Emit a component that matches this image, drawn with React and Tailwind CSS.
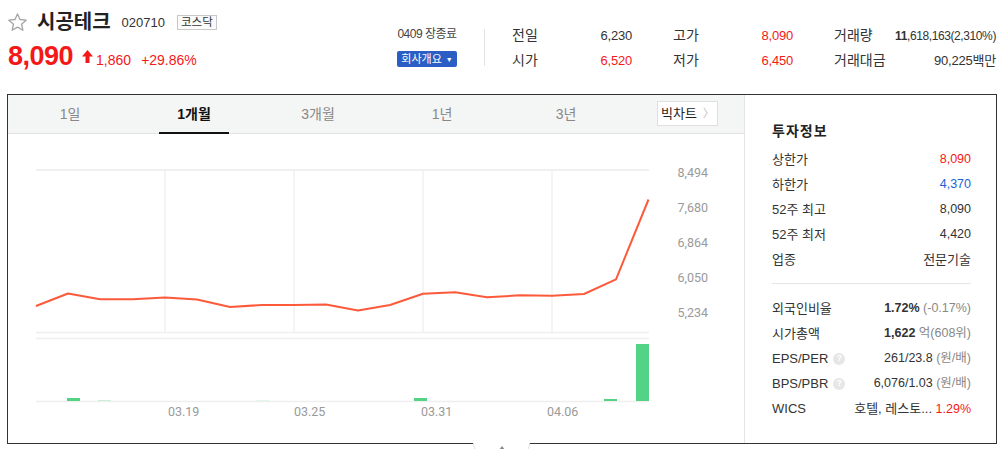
import React from "react";

const RED = "text-[#f51818]";

const pts = [
  [36, 306], [68, 293.5], [100, 299.3], [133, 299.3], [165, 297.5], [197, 299.5],
  [230, 307], [262, 305], [294, 305], [326, 304.5], [358, 310.5], [390, 305],
  [423, 293.7], [455, 292.3], [487, 297.3], [520, 295.3], [552, 295.7], [584, 294],
  [616, 279.3], [648.5, 199.5],
];

const bars = [
  [67, 398, 3, "#53d385"],
  [98, 400, 1, "#c9efd7"],
  [256, 400, 1, "#e3f6ea"],
  [414, 398, 3, "#53d385"],
  [604, 399, 2, "#53d385"],
  [636, 344, 57, "#53d385"],
];

function Chart() {
  const d = pts.map((p, i) => (i === 0 ? "M" : "L") + p[0] + " " + p[1]).join(" ");
  const yl = [["8,494", 177], ["7,680", 212], ["6,864", 247], ["6,050", 282], ["5,234", 317]];
  const xl = [["03.19", 168], ["03.25", 294], ["03.31", 421], ["04.06", 547]];
  return (
    <svg width="736" height="309" viewBox="8 134 736 309" className="block">
      <line x1="36" y1="170" x2="649" y2="170" stroke="#f0f0f0" strokeWidth="2" />
      {[165, 294, 423, 552].map((x) => (
        <line key={x} x1={x} y1="170" x2={x} y2="332" stroke="#f0f0f0" strokeWidth="1.5" />
      ))}
      <line x1="36" y1="332.5" x2="649" y2="332.5" stroke="#efefef" strokeWidth="1.5" />
      <line x1="36" y1="338.5" x2="649" y2="338.5" stroke="#efefef" strokeWidth="1.5" />
      <line x1="36" y1="401.5" x2="649" y2="401.5" stroke="#efefef" strokeWidth="1.5" />
      <path d={d} fill="none" stroke="#fd5a3b" strokeWidth="2" strokeLinejoin="round" />
      {bars.map(([x, y, h, c], i) => (
        <rect key={i} x={x} y={y} width="13" height={h} fill={c} />
      ))}
      {yl.map(([t, y]) => (
        <text key={t} x="708" y={y} textAnchor="end" fontSize="12.5" fill="#9a9a9a" fontFamily="Roboto, 'Liberation Sans', sans-serif">
          {t}
        </text>
      ))}
      {xl.map(([t, x]) => (
        <text key={t} x={x} y="416" fontSize="12.5" fill="#9a9a9a" fontFamily="Roboto, 'Liberation Sans', sans-serif">
          {t}
        </text>
      ))}
    </svg>
  );
}

function Help() {
  return (
    <span className="ml-[5px] inline-flex h-[12px] w-[12px] items-center justify-center rounded-full bg-[#e6e6e6] text-[9px] font-bold leading-none text-white">
      ?
    </span>
  );
}

function Row({ label, children }) {
  return (
    <div className="flex h-[25px] items-center justify-between">
      <div className="flex items-center text-[13px] text-[#333]">{label}</div>
      <div className="text-[12.5px] text-[#333]">{children}</div>
    </div>
  );
}

export default function App() {
  const tabs = ["1일", "1개월", "3개월", "1년", "3년"];
  return (
    <div className="relative h-[449px] w-[1004px] overflow-hidden bg-white font-['Liberation_Sans','Noto_Sans_CJK_KR',sans-serif] text-[#333]">
      {/* header */}
      <div className="flex h-[94px]">
        <div className="w-[390px] pl-[7px] pt-[11px]">
          <div className="flex h-[22px] items-center">
            <svg width="21" height="21" viewBox="0 0 24 24" className="mr-[9px]">
              <path d="M12 2.2l2.9 6.4 7 .7-5.3 4.7 1.6 6.9L12 17.3l-6.2 3.6 1.6-6.9-5.3-4.7 7-.7z" fill="none" stroke="#a5a5a5" strokeWidth="1.5" strokeLinejoin="round" />
            </svg>
            <span className="text-[20px] font-bold leading-none text-[#222]">시공테크</span>
            <span className="ml-[11px] text-[13px] leading-none text-[#333]">020710</span>
            <span className="ml-[12px] border border-[#c8c8c8] bg-[#fafafa] px-[3px] text-[11.5px] leading-[13px] text-[#333]">코스닥</span>
          </div>
          <div className={`mt-[7px] flex items-baseline pl-[1px] ${RED}`}>
            <span className="text-[27px] font-bold leading-[32px] tracking-[-0.5px]">8,090</span>
            <svg width="11" height="13" viewBox="0 0 11 13" className="ml-[9px] self-center">
              <path d="M5.5 0L11 6.5H7.5V13h-4V6.5H0z" fill="#f51818" />
            </svg>
            <span className="ml-[3px] text-[14px]">1,860</span>
            <span className="ml-[10px] text-[14px]">+29.86%</span>
          </div>
        </div>
        <div className="ml-[7px] w-[60px] pt-[27px]">
          <div className="text-center text-[12px] leading-[14px] tracking-[-0.5px] text-[#444]">0409 장종료</div>
          <div className="mt-[10px] flex h-[16px] items-center justify-center rounded-[2px] bg-[#2b5ec5] text-[11px] leading-none text-white">
            회사개요
            <span className="ml-[4px] text-[7px]">▼</span>
          </div>
        </div>
        <div className="ml-[27px] mt-[29px] h-[37px] w-px bg-[#e2e2e2]" />
        <div className="ml-[27px] pt-[23px] text-[14px]">
          {[
            [["전일", "6,230", ""], ["고가", "8,090", RED], ["거래량", null, ""]],
            [["시가", "6,520", RED], ["저가", "6,450", RED], ["거래대금", "90,225백만", ""]],
          ].map((row, ri) => (
            <div key={ri} className="flex h-[25px] items-center">
              {row.map(([l, v, c], ci) => (
                <div key={ci} className={`flex items-center justify-between ${ci === 2 ? "w-[162px]" : "mr-[41px] w-[120px]"}`}>
                  <span className="text-[14px] text-[#333]">{l}</span>
                  {v === null ? (
                    <span className="text-[12px] tracking-[-0.4px] text-[#333]">
                      <b>11</b>,618,163(2,310%)
                    </span>
                  ) : (
                    <span className={`text-[13px] tracking-[-0.2px] ${c || "text-[#333]"}`}>{v}</span>
                  )}
                </div>
              ))}
            </div>
          ))}
        </div>
      </div>

      {/* box */}
      <div className="ml-[7px] flex h-[350px] w-[990px] border border-[#333]">
        <div className="flex w-[736px] flex-col">
          <div className="flex h-[39px] border-b border-[#e4e4e4] bg-[#f4f5f5]">
            {tabs.map((t, i) => (
              <div key={t} className="relative flex w-[124px] items-center justify-center">
                <span className={`text-[14px] ${i === 1 ? "font-bold text-[#111]" : "text-[#888]"}`}>{t}</span>
                {i === 1 && <div className="absolute bottom-[-1px] left-[27px] h-[2px] w-[70px] bg-[#111]" />}
              </div>
            ))}
            <div className="ml-[29px] mt-[6px] flex h-[25px] w-[61px] items-center justify-center border border-[#e0e0e0] bg-white text-[13px] text-[#222]">
              빅차트
              <span className="ml-[6px] text-[11px] text-[#bbb]">〉</span>
            </div>
          </div>
          <Chart />
        </div>
        <div className="w-[252px] border-l border-[#e4e4e4] pl-[27px] pr-[25px] pt-[26px]">
          <div className="h-[20px] text-[14px] font-bold leading-[20px] tracking-[1px] text-[#222]">투자정보</div>
          <div className="mt-[6px]">
            <Row label="상한가"><span className={RED}>8,090</span></Row>
            <Row label="하한가"><span className="text-[#1d63d6]">4,370</span></Row>
            <Row label="52주 최고">8,090</Row>
            <Row label="52주 최저">4,420</Row>
            <Row label="업종"><span className="text-[13px]">전문기술</span></Row>
          </div>
          <div className="mt-[11px] h-px bg-[#e6e6e6]" />
          <div className="mt-[12px]">
            <Row label="외국인비율">
              <b>1.72%</b> <span className="text-[#888]">(-0.17%)</span>
            </Row>
            <Row label="시가총액">
              <b>1,622</b> <span className="text-[#888]">억(608위)</span>
            </Row>
            <Row label={<>EPS/PER<Help /></>}>
              261/23.8 <span className="text-[#888]">(원/배)</span>
            </Row>
            <Row label={<>BPS/PBR<Help /></>}>
              6,076/1.03 <span className="text-[#888]">(원/배)</span>
            </Row>
            <Row label="WICS">
              <span className="text-[13px]">호텔, 레스토...</span> <span className={RED}>1.29%</span>
            </Row>
          </div>
        </div>
      </div>
      <div className="absolute left-[473px] top-[443px] flex h-[14px] w-[57px] justify-center rounded-b-full border border-t-0 border-[#e2e2e2] bg-white">
        <svg width="6" height="4" viewBox="0 0 6 4" className="mt-[3px]">
          <path d="M3 0L6 4H0z" fill="#888" />
        </svg>
      </div>
    </div>
  );
}
